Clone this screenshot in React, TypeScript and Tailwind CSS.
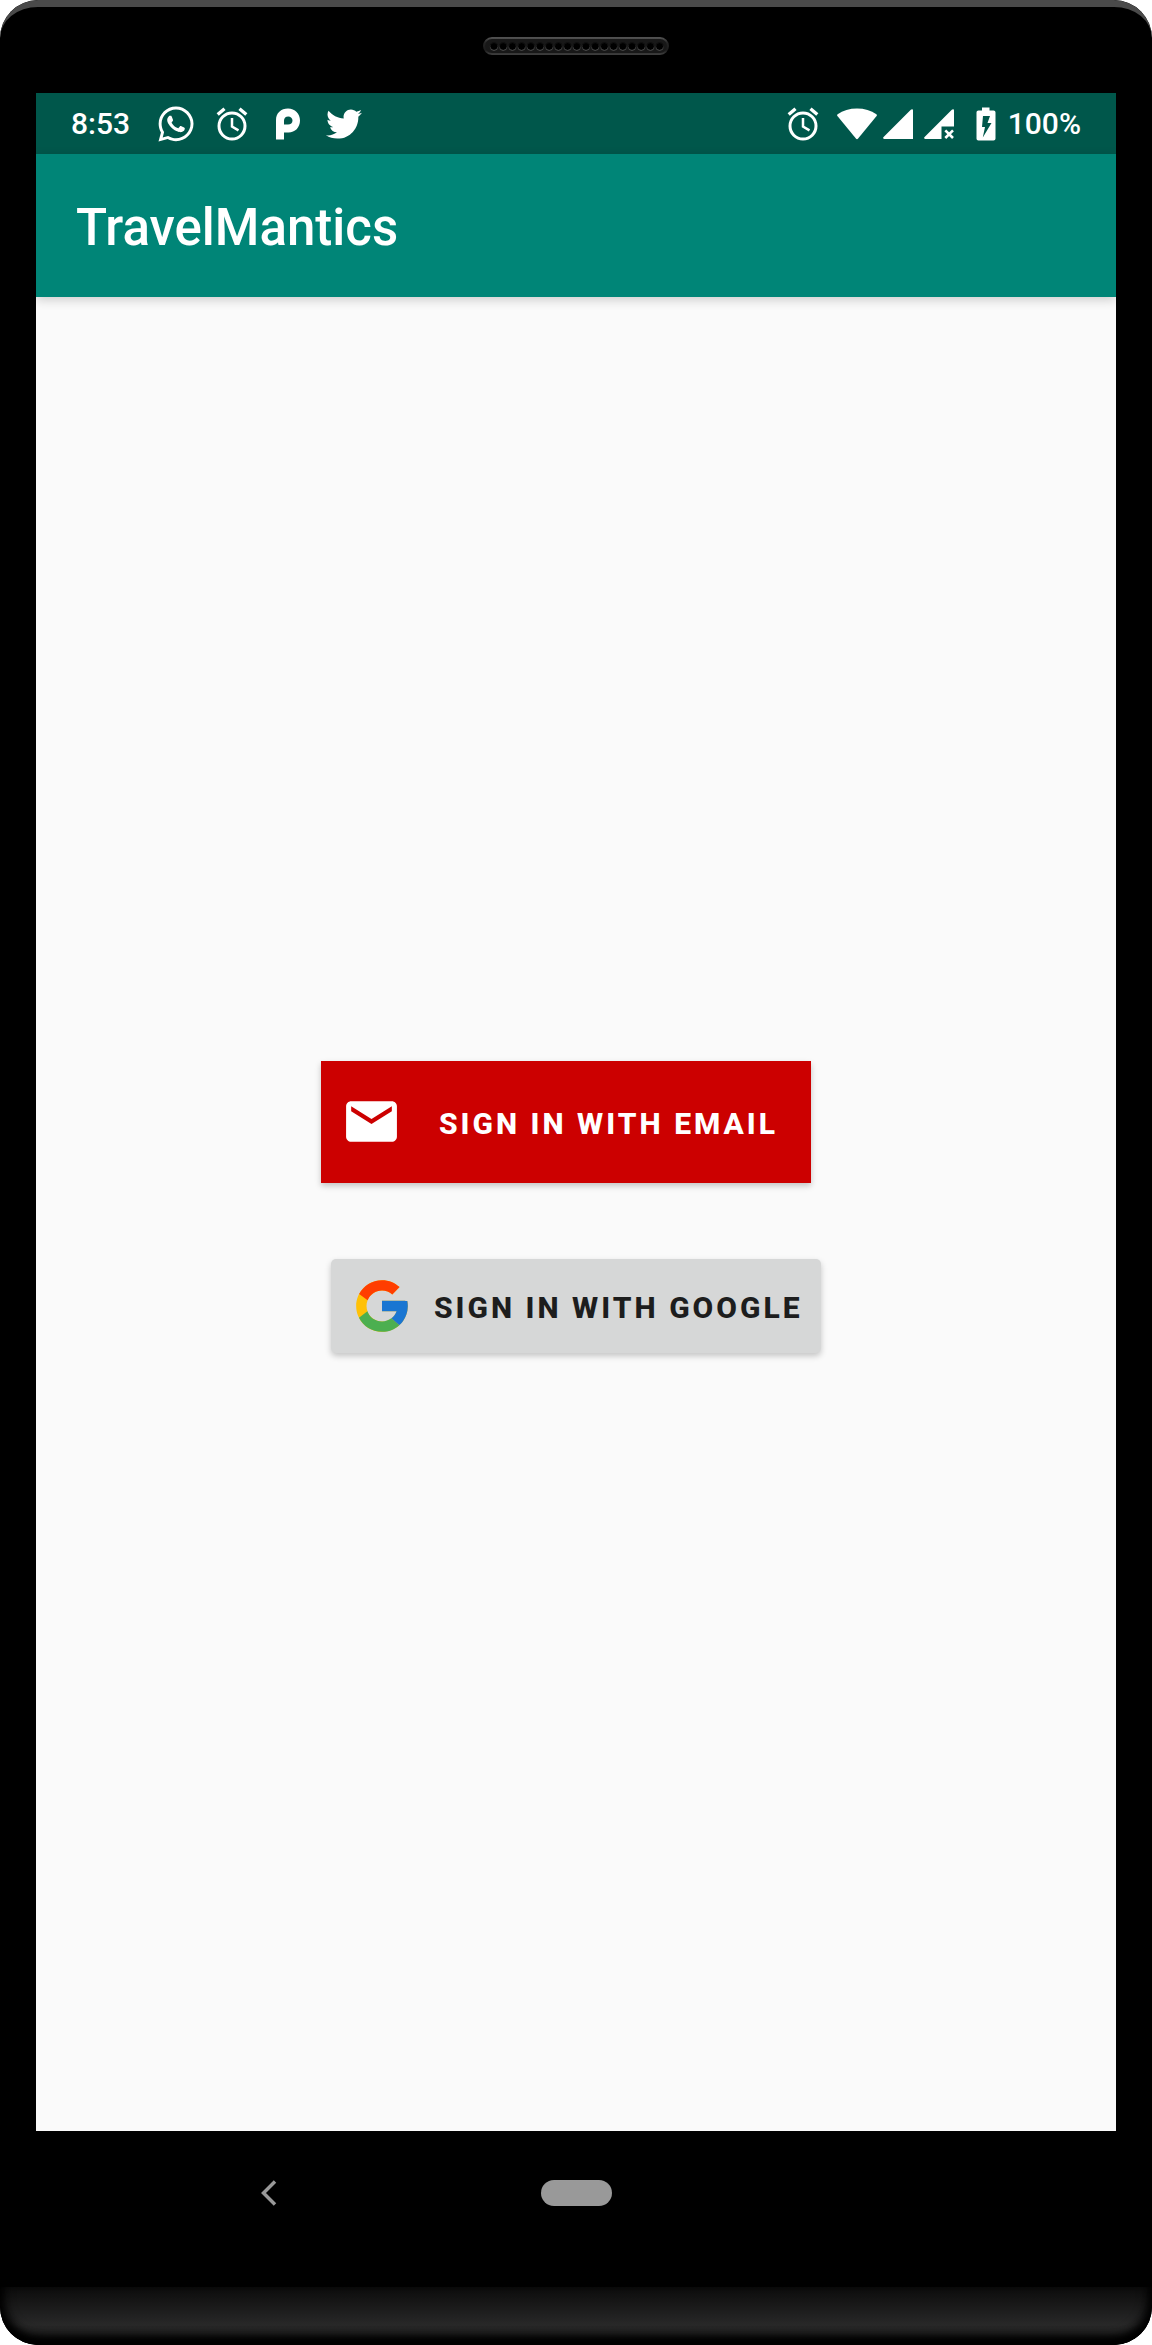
import { FaTwitter, FaWhatsapp } from "react-icons/fa";
import { FcGoogle } from "react-icons/fc";
import { MdEmail } from "react-icons/md";

function Alarm() {
  return (
    <svg viewBox="0 0 32 34" className="h-[34px] w-8" fill="none" stroke="currentColor" aria-hidden="true">
      <circle cx="16" cy="19" r="13" strokeWidth="3" />
      <path d="M16 11v8.500l6.500 3.800" strokeWidth="2.500" />
      <path d="M1.700 7.500 8.500 1.800M30.300 7.500 23.500 1.800" strokeWidth="3.400" />
    </svg>
  );
}

function PMark() {
  return (
    <svg viewBox="0 0 24 32" className="h-8 w-6" fill="currentColor" aria-hidden="true">
      <path
        fillRule="evenodd"
        d="M0 31.500V12C0 5 5 .5 12 .5S24 5.500 24 12.500 19 24.500 12.500 24.500H8v7ZM8 16.500h4c2.700 0 4.500-1.600 4.500-4S14.700 8.400 12.200 8.400 8 10 8 12.500Z"
      />
    </svg>
  );
}

function Wifi() {
  return (
    <svg viewBox="0 0 40 32" className="h-8 w-10" fill="currentColor" aria-hidden="true">
      <path d="M.6 6.200C6 2.600 12.500.6 20 .6s14 2 19.400 5.600c.6.500.6 1.300.2 1.900L21.100 30.600c-.6.700-1.600.7-2.200 0L.4 8.100C0 7.500 0 6.700.6 6.200Z" />
    </svg>
  );
}

function Signal() {
  return (
    <svg viewBox="0 0 30 30" className="size-[30px]" fill="currentColor" aria-hidden="true">
      <path d="M27.800.8C28.700-.1 30 0 30 1.500V30H1.200C0 30-.3 28.900.6 28Z" />
    </svg>
  );
}

function SignalOff() {
  return (
    <svg viewBox="0 0 30 30" className="size-[30px]" aria-hidden="true">
      <path d="M27.800.8C28.700-.1 30 0 30 1.500V17.500H17.500V30H1.200C0 30-.3 28.900.6 28Z" fill="currentColor" />
      <path d="m21.300 21.300 7.700 7.700m0-7.700L21.300 29" stroke="currentColor" strokeWidth="2.600" />
    </svg>
  );
}

function Battery() {
  return (
    <svg viewBox="0 0 20 34" className="h-[34px] w-5" fill="currentColor" aria-hidden="true">
      <path
        fillRule="evenodd"
        d="M6 .5h7.500v3h4c1.200 0 2 .8 2 2V31.500c0 1.200-.8 2-2 2H2.500c-1.200 0-2-.8-2-2V5.500c0-1.200.8-2 2-2H6ZM7 9 6 20h3L6.800 30.500 15.500 16h-4L14 9Z"
      />
    </svg>
  );
}

function Speaker() {
  return (
    <svg viewBox="0 0 186 18" className="h-[18px] w-[186px]" aria-hidden="true">
      <defs>
        <linearGradient id="rim" x1="0" y1="0" x2="0" y2="1">
          <stop offset="0" stopColor="#505050" />
          <stop offset=".3" stopColor="#242424" />
          <stop offset=".75" stopColor="#1c1c1c" />
          <stop offset="1" stopColor="#3c3c3c" />
        </linearGradient>
        <linearGradient id="hole" x1="0" y1="0" x2="0" y2="1">
          <stop offset=".3" stopColor="#111" />
          <stop offset="1" stopColor="#555" />
        </linearGradient>
      </defs>
      <rect x="1" y="1" width="184" height="16" rx="8" fill="#181818" stroke="url(#rim)" strokeWidth="2" />
      {Array.from({ length: 19 }, (_, i) => (
        <circle key={i} cx={11 + i * 9.2} cy="9.500" r="3.900" fill="#000" stroke="url(#hole)" />
      ))}
    </svg>
  );
}

export default function App() {
  return (
    <div className="bg-white font-[Roboto,sans-serif]">
      <div className="flex min-h-screen flex-col overflow-hidden rounded-[38px] bg-black">
        <div className="flex h-[93px] shrink-0 items-center justify-center rounded-t-[38px] border-t-[7px] border-[#4a4a4a] pb-2">
          <Speaker />
        </div>

        <div className="mx-9 flex grow flex-col bg-[#fafafa]">
          <div className="flex h-[61px] items-center justify-between bg-[#00574b] px-[35px] text-[30px] font-medium text-white">
            <div className="flex items-center">
              <span className="mr-[26px]">8:53</span>
              <FaWhatsapp className="mr-5 size-10" aria-hidden="true" />
              <Alarm />
              <span className="mr-[26px] ml-7">
                <PMark />
              </span>
              <FaTwitter className="size-9" aria-hidden="true" />
            </div>
            <div className="flex items-center">
              <Alarm />
              <span className="mr-1.5 ml-[18px]">
                <Wifi />
              </span>
              <span className="mr-[11px]">
                <Signal />
              </span>
              <SignalOff />
              <span className="mr-3 ml-[22px]">
                <Battery />
              </span>
              <span>100%</span>
            </div>
          </div>

          <header className="flex h-[143px] items-center bg-[#008577] px-10 pt-1.5 shadow-[0_3px_10px_rgba(0,0,0,0.18)]">
            <h1 className="text-[51px] font-medium text-white">TravelMantics</h1>
          </header>

          <main className="flex grow flex-col items-center justify-center gap-[76px] pb-[15px]">
            <button
              type="button"
              className="mr-5 flex h-[122px] w-[490px] items-center bg-[#cc0000] pl-5 text-[30px] font-extrabold tracking-[3px] text-white uppercase shadow-[0_3px_6px_rgba(0,0,0,0.22)]"
            >
              <MdEmail className="mr-[37px] size-[61px]" aria-hidden="true" />
              <span className="pt-[3px]">Sign in with email</span>
            </button>
            <button
              type="button"
              className="flex h-[94px] w-[490px] items-center rounded-[5px] bg-[#d6d7d7] pl-5 text-[30px] font-extrabold tracking-[3px] text-[#1d1d1d] uppercase shadow-[0_3px_6px_rgba(0,0,0,0.22)]"
            >
              <FcGoogle className="mr-[21px] size-[62px]" aria-hidden="true" />
              <span className="pt-[3px]">Sign in with Google</span>
            </button>
          </main>
        </div>

        <nav className="grid h-[156px] shrink-0 grid-cols-[1fr_auto_1fr] items-center px-9 pb-[33px]" aria-label="System">
          <button type="button" aria-label="Back" className="mr-[38px] justify-self-center text-[#999]">
            <svg viewBox="0 0 16 26" className="h-[26px] w-4" fill="none" stroke="currentColor" strokeWidth="3.500" aria-hidden="true">
              <path d="M14 1.500 2.500 13 14 24.500" />
            </svg>
          </button>
          <button type="button" aria-label="Home" className="h-[26px] w-[71px] rounded-full bg-[#999]" />
        </nav>
        <div className="h-[58px] shrink-0 rounded-b-[38px] bg-linear-to-b from-[#0c0c0c] via-[#282828] via-65% to-[#1c1c1c] shadow-[inset_0_-6px_8px_#000,inset_6px_-8px_12px_-3px_#000,inset_-6px_-8px_12px_-3px_#000]" />
      </div>
    </div>
  );
}
